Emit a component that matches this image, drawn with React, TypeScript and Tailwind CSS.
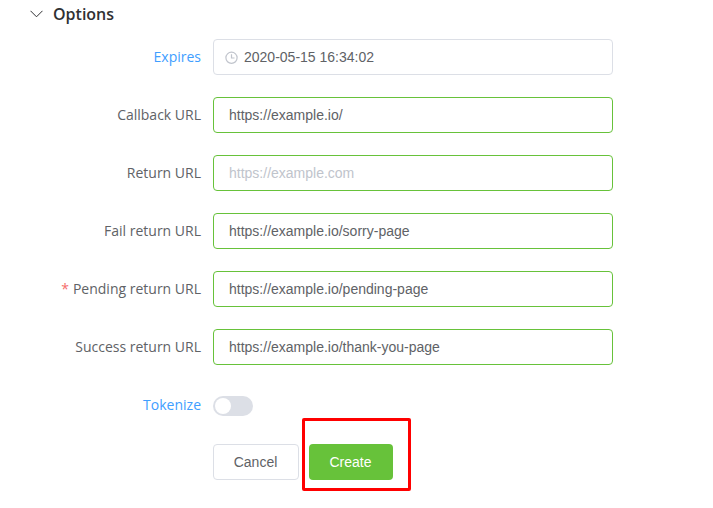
const sans = "font-['Open_Sans',sans-serif]";
const inputFont = "font-['Liberation_Sans',Arial,sans-serif]";

type FieldProps = {
  label: string;
  value?: string;
  placeholder?: string;
  required?: boolean;
};

const Label = ({ text, active, required }: { text: string; active?: boolean; required?: boolean }) => (
  <label
    className={`w-[201px] shrink-0 text-right text-sm ${sans} ${active ? "text-[#409eff]" : "text-[#606266]"}`}
  >
    {required && <span className="mr-1 text-[#f56c6c]">*</span>}
    {text}
  </label>
);

const Field = ({ label, value, placeholder, required }: FieldProps) => (
  <div className="flex h-9 items-center gap-3">
    <Label text={label} required={required} />
    <div
      className={`flex h-9 w-[400px] items-center rounded border border-[#67c23a] bg-white px-[15px] text-sm ${inputFont} ${
        value ? "text-[#606266]" : "text-[#c0c4cc]"
      }`}
    >
      {value ?? placeholder}
    </div>
  </div>
);

export default function App() {
  return (
    <div className="relative h-[508px] w-[713px] overflow-hidden bg-white">
      <div className="flex h-[28px] items-center gap-[10px] pl-[30px]">
        <svg width="13" height="8" viewBox="0 0 13 8" fill="none" stroke="#303133" strokeWidth="1">
          <path d="M0.5 0.8 L6.5 6.8 L12.5 0.8" />
        </svg>
        <h3 className={`text-base font-semibold text-[#303133] ${sans}`}>Options</h3>
      </div>

      <form className="mt-[11px] flex flex-col gap-[22px]">
        <div className="flex h-9 items-center gap-3">
          <Label text="Expires" active />
          <div
            className={`flex h-9 w-[400px] items-center gap-[6px] rounded border border-[#dcdfe6] bg-white pl-[11px] text-sm text-[#606266] ${inputFont}`}
          >
            <svg width="13" height="13" viewBox="0 0 13 13" fill="none" stroke="#c0c4cc" strokeWidth="1.2">
              <circle cx="6.5" cy="6.8" r="5.6" />
              <path d="M6.5 3.2 V7 H9.5" />
            </svg>
            2020-05-15 16:34:02
          </div>
        </div>
        <Field label="Callback URL" value="https://example.io/" />
        <Field label="Return URL" placeholder="https://example.com" />
        <Field label="Fail return URL" value="https://example.io/sorry-page" />
        <Field label="Pending return URL" value="https://example.io/pending-page" required />
        <Field label="Success return URL" value="https://example.io/thank-you-page" />
        <div className="flex h-[36px] items-center gap-3">
          <Label text="Tokenize" active />
          <div className="mt-[2px] flex h-5 w-10 items-center rounded-full bg-[#dcdfe6] pl-[2px]">
            <div className="size-4 rounded-full bg-white" />
          </div>
        </div>
      </form>

      <div className={`mt-[21px] flex gap-[10px] pl-[213px] text-sm ${inputFont}`}>
        <button
          type="button"
          className="h-9 w-[86px] rounded border border-[#dcdfe6] bg-white pr-px text-[#606266]"
        >
          Cancel
        </button>
        <button type="button" className="h-9 w-[84px] rounded bg-[#67c23a] pr-px text-white">
          Create
        </button>
      </div>

      {/* annotation drawn over the screenshot */}
      <div className="absolute left-[302px] top-[418px] h-[73px] w-[109px] rounded-[2px] border-[3px] border-[#ff0000]" />
    </div>
  );
}
